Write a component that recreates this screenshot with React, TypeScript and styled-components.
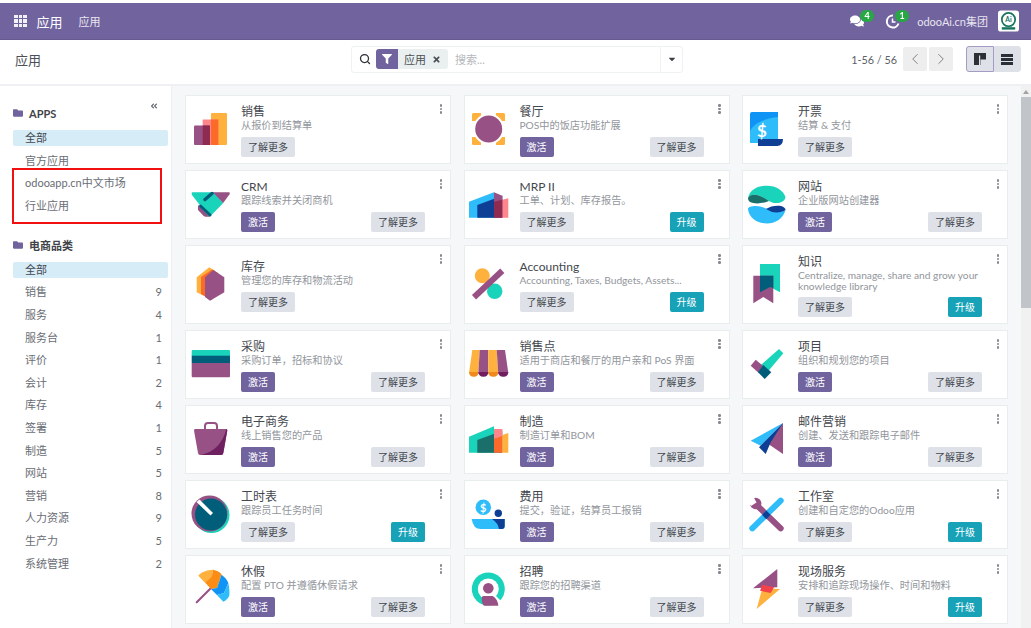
import React from "react";
import styled, { createGlobalStyle } from "styled-components";
import { ChevronLeft, ChevronRight, Search } from "lucide-react";
import {
  FaAngleDoubleLeft,
  FaCaretDown,
  FaComments,
  FaFilter,
  FaFolder,
  FaTimes,
} from "react-icons/fa";

type Action = "activate" | "upgrade" | "none";

const PURPLE = "#985184";
const TEAL = "#1ad3bb";
const NAVY = "#005e7a";
const ORANGE = "#ffb13d";
const RED = "#fc6a2a";
const PINK = "#fc868b";
const SKY = "#2ebcfa";
const BLUE = "#0f3f94";

const icons: Record<string, React.ReactNode> = {
  sales: (
    <>
      <rect x="21" y="4" width="16" height="32" rx="1" fill={ORANGE} />
      <rect x="12.7" y="10.5" width="15.6" height="25.5" fill={PINK} />
      <rect x="21" y="10.5" width="7.3" height="25.5" fill={RED} />
      <rect x="4" y="16.5" width="16" height="19.5" rx="1" fill={PURPLE} />
      <rect x="12.7" y="16.5" width="7.3" height="19.5" fill="#8f2a50" />
    </>
  ),
  restaurant: (
    <>
      <rect x="3" y="4" width="33" height="32" rx="1.5" fill={ORANGE} />
      <rect x="12" y="0" width="15" height="40" fill="#fff" />
      <rect x="0" y="12" width="40" height="16" fill="#fff" />
      <circle cx="19.7" cy="20" r="15.5" fill="#fff" />
      <circle cx="19.7" cy="20" r="13.5" fill={PURPLE} />
    </>
  ),
  invoice: (
    <>
      <path d="M3 5q0-2 2-2h26v31H3z" fill="#0f93f5" />
      <path d="M3 34V22C8 13 20 9 31 8v26z" fill={SKY} />
      <path d="M11 30h25q0 7-6 7H11z" fill={BLUE} />
      <text x="15" y="28" fontSize="17" fontWeight="700" fill="#fff" textAnchor="middle">
        $
      </text>
    </>
  ),
  crm: (
    <>
      <path d="M21.7 8.3H39q1.5 0 .5 2L33 19.3z" fill={PURPLE} />
      <path d="M8 21l12 11.7h-4q-1.5 0-3-1.5L8 26z" fill={PURPLE} />
      <path d="M2.5 8.3H23l10 11L21 31.5q-1.5 1.2-3 0L2 11q-1-2.7.5-2.7z" fill={TEAL} />
      <path d="M15 15.5l7-6" stroke={NAVY} strokeWidth="3.5" strokeLinecap="round" />
      <path d="M10.5 22l9.5 9" stroke={NAVY} strokeWidth="3" strokeLinecap="round" />
    </>
  ),
  mrp: (
    <>
      <path d="M0 17.7L25 8.3v25.4H0z" fill={SKY} />
      <path d="M8.3 21l25-9.3v22H8.3z" fill={BLUE} />
      <path d="M25 17.7l14.3-3.4v19.4H25z" fill={PINK} />
      <path d="M25 8.3l8.3 3.4v22H25z" fill={PURPLE} />
      <path d="M25 17.7l8.3-2v18H25z" fill="#8f2a50" />
    </>
  ),
  website: (
    <>
      <path d="M1 14C3 5 12 1.7 20 1.7c9 0 16 4.3 18.5 11.3-.5 4-4.5 6-9.5 6-7 0-11-6-19-8-4-1-8 0-9 3z" fill={TEAL} />
      <path d="M1 14c1-3 5-4 9-3 5 1 8 4 12 6-7 3-15 3-19 1-1-1-2-2-2-4z" fill="#1b6f6a" />
      <path d="M1 25c0-2 3-3 8-3 7 0 11 4 19 5 5 1 9 0 10.5-1C36 35 28 39.5 20 39.5 10 39.5 2 34 1 25z" fill={SKY} />
      <path d="M19 25c4-3 11-4 15-3 3 1 4.5 2 4.5 4-2.5 2-8.5 3-13.5 2-2-1-4-2-6-3z" fill={BLUE} />
    </>
  ),
  inventory: (
    <>
      <path d="M6.7 13.3L19.3 3.3 25 6.7 20 35 6.7 28.3z" fill={ORANGE} />
      <path d="M11 13l11-7.5L28 9l-6 27-11-6z" fill={RED} />
      <path d="M15 13.3L23.3 6l11 7.3v15L20 36.7 15 33z" fill={PURPLE} />
    </>
  ),
  accounting: (
    <>
      <circle cx="13.3" cy="11.7" r="7.5" fill={ORANGE} />
      <circle cx="25.7" cy="27.3" r="7.7" fill={TEAL} />
      <path d="M33.3 6.7L5 33.3" stroke={PURPLE} strokeWidth="6" />
    </>
  ),
  knowledge: (
    <>
      <path d="M13 0h20v28.3L23 23l-10 5.3z" fill={TEAL} />
      <path d="M6.3 11.7h20v27.6L16.3 33 6.3 39.3z" fill={PURPLE} />
      <path d="M13 11.7h13.3V24L23 23l-10 5.3z" fill={NAVY} />
    </>
  ),
  purchase: (
    <>
      <path d="M1.7 7q0-1 1-1H39q1 0 1 1v5H1.7z" fill={TEAL} />
      <rect x="1.7" y="11.7" width="38.3" height="7.3" fill={NAVY} />
      <path d="M1.7 19H40v13q0 1.3-1 1.3H2.7q-1 0-1-1.3z" fill={PURPLE} />
    </>
  ),
  pos: (
    <>
      <path d="M3.3 6h7.4L9.3 30 0 29z" fill={ORANGE} />
      <path d="M10.7 6h8.6L19.3 30H9.3z" fill={PURPLE} />
      <path d="M19.3 6h8.4L29.3 30h-10z" fill={ORANGE} />
      <path d="M27.7 6h8.3l3.3 23-10 1z" fill={PURPLE} />
      <path d="M0 28h9.5q0 4.7-4.7 4.7T0 28z" fill="#f08a1d" />
      <path d="M9.5 28h9.8q0 4.7-4.9 4.7T9.5 28z" fill="#6e1e5f" />
      <path d="M19.3 28h10q0 4.7-5 4.7t-5-4.7z" fill="#f08a1d" />
      <path d="M29.3 28h10q0 4.7-5 4.7t-5-4.7z" fill="#6e1e5f" />
    </>
  ),
  project: (
    <>
      <path d="M32 5l4.3 4.3-16 19L13 21.7z" fill={TEAL} />
      <path d="M8.7 15.7L17 22.7 12 29.3 3.7 21.7z" fill={PURPLE} />
      <path d="M16.3 21l8 7.3-6.6 6.7L11 28.3z" fill={NAVY} />
    </>
  ),
  ecommerce: (
    <>
      <path d="M15 10V7q0-3 3-3h6q3 0 3 3v3" fill="none" stroke={PURPLE} strokeWidth="2" />
      <path d="M5 10h31.3q1 0 1 1.5L33.3 34q-.3 2-2 2H10q-1.7 0-2-2L4 11.5q0-1.5 1-1.5z" fill={PURPLE} />
      <path d="M37.3 11.5L33.3 34q-.3 2-2 2H11C24 33 33 24 36.3 10q1 0 1 1.5z" fill="#6f2060" />
    </>
  ),
  manufacturing: (
    <>
      <path d="M0 17.7L25 7.3v26.4H0z" fill={TEAL} />
      <path d="M8.3 21l25-9.3v22H8.3z" fill="#1b6f6a" />
      <path d="M25 10l8.3 0v8L25 20z" fill={PINK} />
      <path d="M33.3 16l6-2v19.7h-6z" fill={ORANGE} />
      <path d="M25 20l8.3-3v16.7H25z" fill={RED} />
    </>
  ),
  email: (
    <>
      <path d="M36 4v31L18.7 23.3z" fill={PURPLE} />
      <path d="M36 4L3.7 21.7l10 5z" fill={SKY} />
      <path d="M36 4L12 28.3 18.7 35l5-11.7z" fill={BLUE} />
    </>
  ),
  timesheet: (
    <>
      <circle cx="21.5" cy="21" r="18" fill={TEAL} />
      <circle cx="19.5" cy="19.5" r="18" fill={PURPLE} />
      <circle cx="21" cy="20.5" r="16" fill={NAVY} />
      <path d="M6.5 8l3-2.5L23 19l-2.5 2.5z" fill="#fff" />
    </>
  ),
  expenses: (
    <>
      <circle cx="14.3" cy="13.3" r="7.7" fill={SKY} />
      <text x="14.3" y="17.5" fontSize="11" fontWeight="700" fill="#fff" textAnchor="middle">
        $
      </text>
      <circle cx="29.3" cy="19.3" r="3.7" fill={BLUE} />
      <path d="M2.7 25h33v7q0 3-3 3H12q-8 0-9.3-10z" fill={SKY} />
      <path d="M23 25h12.7v7q0 3-3 3H30q-1-6-7-10z" fill={BLUE} />
    </>
  ),
  studio: (
    <>
      <path d="M10.3 11.7l23.4 22.6" stroke={PURPLE} strokeWidth="6" strokeLinecap="round" />
      <circle cx="8.7" cy="9.5" r="5.7" fill={PURPLE} />
      <path d="M6 2l3.5 6.5L4 12 1 7z" fill="#fff" />
      <path d="M33.7 6.7L5.3 34.3" stroke={SKY} strokeWidth="6" strokeLinecap="round" />
      <path d="M19.3 16.5l4.3 4.3-4.3 4.4-4.3-4.4z" fill={BLUE} />
    </>
  ),
  timeoff: (
    <>
      <path d="M6.7 33.3l15-15" stroke={PURPLE} strokeWidth="2" strokeLinecap="round" />
      <path d="M8.3 6.7C11 3 17 1 23 .7l-1 7-7 6z" fill={ORANGE} />
      <path d="M15 13.5l7-6C22 5 23 2 23 .7c5 1 8 3 8.5 5L27 19l-6 1z" fill="#fb8c15" />
      <path d="M21 20l6-1 4.5-13.3C35 8 37.5 11.5 38.3 14L34 24l-7 2z" fill="#0f93f5" />
      <path d="M27 26l7-2 4.3-10c1 4 1.4 9 1 12.7-1 2.3-3.5 5-6 6z" fill={SKY} />
    </>
  ),
  recruitment: (
    <>
      <circle cx="19.3" cy="20" r="16.5" fill={TEAL} />
      <circle cx="19.3" cy="20" r="10.5" fill="#fff" />
      <path d="M26 26l9 9-4 3-8-9z" fill="#fff" />
      <circle cx="19.3" cy="19.3" r="5.3" fill={PURPLE} />
      <path d="M12.7 29q0-2 2-2h9q5 3 5.6 9.7H15q-2.3-2-2.3-7.7z" fill={PURPLE} />
    </>
  ),
  service: (
    <>
      <path d="M30.3 0L6 19.3l24.3-1z" fill={PURPLE} />
      <path d="M9.7 40L33 20l-17.7-.7z" fill={ORANGE} />
      <path d="M15.3 15.7L27 18.3 23.7 24 13 21.7z" fill="#f2434a" />
    </>
  ),
};

const apps: { icon: string; title: string; desc: string; action: Action }[] = [
  { icon: "sales", title: "销售", desc: "从报价到结算单", action: "none" },
  { icon: "restaurant", title: "餐厅", desc: "POS中的饭店功能扩展", action: "activate" },
  { icon: "invoice", title: "开票", desc: "结算 & 支付", action: "none" },
  { icon: "crm", title: "CRM", desc: "跟踪线索并关闭商机", action: "activate" },
  { icon: "mrp", title: "MRP II", desc: "工单、计划、库存报告。", action: "upgrade" },
  { icon: "website", title: "网站", desc: "企业版网站创建器", action: "activate" },
  { icon: "inventory", title: "库存", desc: "管理您的库存和物流活动", action: "none" },
  { icon: "accounting", title: "Accounting", desc: "Accounting, Taxes, Budgets, Assets...", action: "upgrade" },
  {
    icon: "knowledge",
    title: "知识",
    desc: "Centralize, manage, share and grow your knowledge library",
    action: "upgrade",
  },
  { icon: "purchase", title: "采购", desc: "采购订单，招标和协议", action: "activate" },
  { icon: "pos", title: "销售点", desc: "适用于商店和餐厅的用户亲和 PoS 界面", action: "activate" },
  { icon: "project", title: "项目", desc: "组织和规划您的项目", action: "activate" },
  { icon: "ecommerce", title: "电子商务", desc: "线上销售您的产品", action: "activate" },
  { icon: "manufacturing", title: "制造", desc: "制造订单和BOM", action: "activate" },
  { icon: "email", title: "邮件营销", desc: "创建、发送和跟踪电子邮件", action: "activate" },
  { icon: "timesheet", title: "工时表", desc: "跟踪员工任务时间", action: "upgrade" },
  { icon: "expenses", title: "费用", desc: "提交，验证，结算员工报销", action: "activate" },
  { icon: "studio", title: "工作室", desc: "创建和自定您的Odoo应用", action: "upgrade" },
  { icon: "timeoff", title: "休假", desc: "配置 PTO 并遵循休假请求", action: "activate" },
  { icon: "recruitment", title: "招聘", desc: "跟踪您的招聘渠道", action: "activate" },
  { icon: "service", title: "现场服务", desc: "安排和追踪现场操作、时间和物料", action: "upgrade" },
];

const categories: [string, number][] = [
  ["销售", 9],
  ["服务", 4],
  ["服务台", 1],
  ["评价", 1],
  ["会计", 2],
  ["库存", 4],
  ["签署", 1],
  ["制造", 5],
  ["网站", 5],
  ["营销", 8],
  ["人力资源", 9],
  ["生产力", 5],
  ["系统管理", 2],
];

function AppCard({ icon, title, desc, action }: (typeof apps)[number]) {
  return (
    <Card>
      <CardIcon viewBox="0 0 40 40">{icons[icon]}</CardIcon>
      <CardBody>
        <CardTitle>{title}</CardTitle>
        <CardDesc>{desc}</CardDesc>
        <CardActions>
          {action === "activate" && <ColorButton $bg="#71639e">激活</ColorButton>}
          <LearnButton>了解更多</LearnButton>
          {action === "upgrade" && <ColorButton $bg="#17a2b8">升级</ColorButton>}
        </CardActions>
      </CardBody>
      <Kebab>
        <i />
        <i />
        <i />
      </Kebab>
    </Card>
  );
}

export default function App() {
  return (
    <>
      <GlobalStyle />
      <Page>
        <TopBar>
          <AppsGrid>
            {Array.from({ length: 9 }).map((_, i) => (
              <i key={i} />
            ))}
          </AppsGrid>
          <BrandName>应用</BrandName>
          <MenuItem>应用</MenuItem>
          <TopRight>
            <Systray>
              <FaComments size={14} />
              <Badge>4</Badge>
            </Systray>
            <Systray>
              <svg width="15" height="15" viewBox="0 0 15 15">
                <path d="M8 1.5a6 6 0 1 0 5.5 8" fill="none" stroke="#fff" strokeWidth="2" />
                <path d="M7.5 4.5v3.5h3" fill="none" stroke="#fff" strokeWidth="1.5" />
              </svg>
              <Badge>1</Badge>
            </Systray>
            <CompanyName>odooAi.cn集团</CompanyName>
            <Avatar viewBox="0 0 22 22">
              <rect width="22" height="22" rx="3" fill="#fff" />
              <circle cx="11" cy="9.5" r="7" fill="none" stroke="#17735f" strokeWidth="1.8" />
              <text x="11" y="12" fontSize="7" fontWeight="700" fill="#17735f" textAnchor="middle">
                Ai
              </text>
              <rect x="4" y="17.5" width="14" height="2.5" fill="#17735f" />
            </Avatar>
          </TopRight>
        </TopBar>

        <ControlPanel>
          <Breadcrumb>应用</Breadcrumb>
          <SearchBox>
            <SearchIcon size={12} strokeWidth={2.5} />
            <FilterTag>
              <FilterIcon>
                <FaFilter size={10} />
              </FilterIcon>
              <FilterLabel>
                应用
                <FaTimes size={9} />
              </FilterLabel>
            </FilterTag>
            <Placeholder>搜索...</Placeholder>
            <SearchCaret>
              <FaCaretDown size={10} />
            </SearchCaret>
          </SearchBox>
          <PanelRight>
            <PagerText>1-56 / 56</PagerText>
            <PagerGroup>
              <PagerButton>
                <ChevronLeft size={18} strokeWidth={1.2} />
              </PagerButton>
              <PagerButton>
                <ChevronRight size={18} strokeWidth={1.2} />
              </PagerButton>
            </PagerGroup>
            <ViewGroup>
              <ViewButton $active>
                <svg width="12" height="12" viewBox="0 0 12 12">
                  <path d="M0 0h12v6.5H6.5V12H0z" fill="#2b2f36" />
                  <rect x="5" y="2.5" width="1.2" height="9.5" fill="#dee2e8" />
                </svg>
              </ViewButton>
              <ViewButton>
                <svg width="12" height="11" viewBox="0 0 12 11">
                  <path d="M0 0h12v3H0zM0 4h12v3H0zM0 8h12v3H0z" fill="#2b2f36" />
                </svg>
              </ViewButton>
            </ViewGroup>
          </PanelRight>
        </ControlPanel>

        <Content>
          <Sidebar>
            <SideHeader>
              <FaFolder size={10} color="#71639e" />
              <span>APPS</span>
              <Collapse>
                <FaAngleDoubleLeft size={8} />
              </Collapse>
            </SideHeader>
            <SideList>
              <SideRow $active>全部</SideRow>
              <SideRow>官方应用</SideRow>
              <RedMark>
                <SideRow>odooapp.cn中文市场</SideRow>
                <SideRow>行业应用</SideRow>
              </RedMark>
            </SideList>
            <SideHeader $second>
              <FaFolder size={10} color="#71639e" />
              <span>电商品类</span>
            </SideHeader>
            <SideList>
              <SideRow $active>全部</SideRow>
              {categories.map(([name, count]) => (
                <SideRow key={name}>
                  {name}
                  <span>{count}</span>
                </SideRow>
              ))}
            </SideList>
          </Sidebar>

          <Main>
            <CardGrid>
              {apps.map((app) => (
                <AppCard key={app.icon} {...app} />
              ))}
            </CardGrid>
          </Main>

          <ScrollTrack>
            <ScrollArrow />
            <ScrollThumb />
          </ScrollTrack>
        </Content>
      </Page>
    </>
  );
}

const GlobalStyle = createGlobalStyle`
  html, body {
    margin: 0;
    padding: 0;
    background: #fff;
    overflow: hidden;
  }
  * {
    box-sizing: border-box;
  }
  body {
    font-family: Lato, "Noto Sans CJK SC", sans-serif;
    color: #4c4f56;
  }
`;

const Page = styled.div`
  width: 1031px;
  height: 628px;
  padding-top: 3px;
  display: flex;
  flex-direction: column;
  overflow: hidden;
  filter: blur(0.4px);
`;

const TopBar = styled.header`
  height: 37px;
  flex: none;
  background: #71639e;
  border-bottom: 1px solid #66598f;
  color: #fff;
  display: flex;
  align-items: center;
  padding: 0 12px 0 14px;
`;

const AppsGrid = styled.div`
  display: grid;
  grid-template-columns: repeat(3, 3.5px);
  grid-auto-rows: 3.5px;
  gap: 1px;
  margin-right: 10px;

  i {
    background: #f3f1f8;
  }
`;

const BrandName = styled.span`
  font-size: 13px;
  margin-right: 16px;
`;

const MenuItem = styled.span`
  font-size: 11px;
  color: #ebe8f2;
`;

const TopRight = styled.div`
  margin-left: auto;
  display: flex;
  align-items: center;
`;

const Systray = styled.div`
  position: relative;
  display: flex;
  width: 15px;
  margin-right: 20px;
  color: #fff;
`;

const Badge = styled.span`
  position: absolute;
  top: -4px;
  left: 10px;
  width: 14px;
  height: 12px;
  border-radius: 6px;
  background: #28a745;
  color: #fff;
  font-size: 9px;
  font-weight: 700;
  line-height: 12px;
  text-align: center;
`;

const CompanyName = styled.span`
  font-size: 11px;
  color: #e8e5f0;
  margin-left: -3px;
  margin-right: 10px;
`;

const Avatar = styled.svg`
  width: 21px;
  height: 22px;
`;

const ControlPanel = styled.div`
  height: 46px;
  flex: none;
  display: flex;
  align-items: center;
  background: #fff;
  border-bottom: 2px solid #eef0f3;
  padding-bottom: 6px;
`;

const Breadcrumb = styled.div`
  width: 351px;
  padding-left: 15px;
  font-size: 13px;
  color: #4c4f56;
`;

const SearchBox = styled.div`
  width: 332px;
  height: 27px;
  display: flex;
  align-items: center;
  border: 1px solid #eef2f2;
  border-radius: 3px;
  padding-left: 7px;
`;

const SearchIcon = styled(Search)`
  color: #2b2f36;
  flex: none;
  margin-right: 5px;
`;

const FilterTag = styled.div`
  display: flex;
  height: 20px;
  font-size: 11px;
`;

const FilterIcon = styled.span`
  width: 22px;
  background: #71639e;
  color: #fff;
  border-radius: 3px 0 0 3px;
  display: flex;
  align-items: center;
  justify-content: center;
`;

const FilterLabel = styled.span`
  width: 50px;
  background: #e9f0ef;
  border-radius: 0 3px 3px 0;
  display: flex;
  align-items: center;
  justify-content: space-between;
  padding: 0 7px 0 6px;
  color: #4c4f56;
`;

const Placeholder = styled.span`
  margin-left: 7px;
  font-size: 11px;
  color: #b4b7bb;
`;

const SearchCaret = styled.span`
  margin-left: auto;
  width: 22px;
  height: 100%;
  display: flex;
  align-items: center;
  justify-content: center;
  border-left: 1px solid #eef2f2;
  color: #3a3e45;
`;

const PanelRight = styled.div`
  margin-left: auto;
  display: flex;
  align-items: center;
  padding-right: 10px;
`;

const PagerText = styled.span`
  font-size: 10.8px;
  color: #5b5f66;
  margin-right: 6px;
`;

const PagerGroup = styled.div`
  display: flex;
  gap: 2px;
  margin-right: 13px;
`;

const PagerButton = styled.div`
  width: 24px;
  height: 24px;
  background: #eeeeef;
  border-radius: 2px;
  color: #73767b;
  display: flex;
  align-items: center;
  justify-content: center;
`;

const ViewGroup = styled.div`
  display: flex;
`;

const ViewButton = styled.div<{ $active?: boolean }>`
  width: 27.5px;
  height: 26px;
  display: flex;
  align-items: center;
  justify-content: center;
  background: #dee2e8;
  border: 1px solid ${(p) => (p.$active ? "#a59cc4" : "#dee2e8")};
  border-radius: ${(p) => (p.$active ? "3px 0 0 3px" : "0 3px 3px 0")};
`;

const Content = styled.div`
  flex: 1;
  min-height: 0;
  display: flex;
`;

const Sidebar = styled.aside`
  width: 172px;
  flex: none;
  padding: 17px 3px 0 13px;
  background: #fff;
  border-right: 1px solid #eceef1;
`;

const SideHeader = styled.div<{ $second?: boolean }>`
  height: 20px;
  display: flex;
  align-items: center;
  gap: 6px;
  margin: ${(p) => (p.$second ? "21px" : "0")} 0 7px;
  font-size: 11px;
  font-weight: 700;
  color: #3f4349;
`;

const Collapse = styled.span`
  margin: -14px 10px 0 auto;
  display: flex;
  color: #6b6f76;
`;

const SideList = styled.div`
  display: flex;
  flex-direction: column;
  gap: 6.6px;
`;

const SideRow = styled.div<{ $active?: boolean }>`
  height: 16px;
  line-height: 16px;
  padding: 0 6px 0 12px;
  display: flex;
  justify-content: space-between;
  font-size: 11px;
  color: ${(p) => (p.$active ? "#43474e" : "#696d74")};
  background: ${(p) => (p.$active ? "#d6ecf7" : "transparent")};
  border-radius: 2px;
`;

const RedMark = styled.div`
  position: relative;
  display: flex;
  flex-direction: column;
  gap: 6.6px;

  &::after {
    content: "";
    position: absolute;
    top: -7px;
    bottom: -10px;
    left: -1px;
    right: 6px;
    border: 2px solid #f01010;
  }
`;

const Main = styled.main`
  flex: 1;
  min-width: 0;
  background: #f6f7f8;
  overflow: hidden;
`;

const CardGrid = styled.div`
  display: grid;
  grid-template-columns: repeat(3, 1fr);
  gap: 6.5px 12.5px;
  padding: 9.2px 13px 0;
`;

const Card = styled.article`
  position: relative;
  display: flex;
  align-items: center;
  padding: 6px 25px 6px 4px;
  background: #fff;
  border: 1px solid #e8edee;
`;

const CardIcon = styled.svg`
  width: 40px;
  height: 40px;
  flex: none;
  margin-right: 11px;
  overflow: visible;
`;

const CardBody = styled.div`
  flex: 1;
  min-width: 0;
`;

const CardTitle = styled.div`
  font-size: 12px;
  line-height: 16px;
  padding-top: 2px;
  color: #43474e;
`;

const CardDesc = styled.div`
  font-size: 10.2px;
  line-height: 10.5px;
  min-height: 11px;
  color: #92969c;
`;

const CardActions = styled.div`
  display: flex;
  justify-content: space-between;
  margin-top: 5.5px;
`;

const LearnButton = styled.span`
  width: 54px;
  height: 20px;
  line-height: 20px;
  text-align: center;
  font-size: 10px;
  color: #43474e;
  background: #dee2e8;
  border-radius: 2px;
`;

const ColorButton = styled.span<{ $bg: string }>`
  width: 34px;
  height: 20px;
  line-height: 20px;
  text-align: center;
  font-size: 10px;
  color: #fff;
  background: ${(p) => p.$bg};
  border-radius: 2px;
`;

const Kebab = styled.span`
  position: absolute;
  top: 8px;
  right: 8px;
  display: flex;
  flex-direction: column;
  gap: 1px;

  i {
    width: 2.5px;
    height: 2.5px;
    border-radius: 50%;
    background: #85888e;
  }
`;

const ScrollTrack = styled.div`
  width: 10px;
  flex: none;
  background: #f1f1f1;
`;

const ScrollArrow = styled.div`
  height: 11px;
  display: flex;
  justify-content: center;
  padding-top: 4px;

  &::before {
    content: "";
    border-left: 3px solid transparent;
    border-right: 3px solid transparent;
    border-bottom: 4px solid #a3a3a3;
    height: 0;
  }
`;

const ScrollThumb = styled.div`
  height: 211px;
  background: #c1c4c8;
`;
